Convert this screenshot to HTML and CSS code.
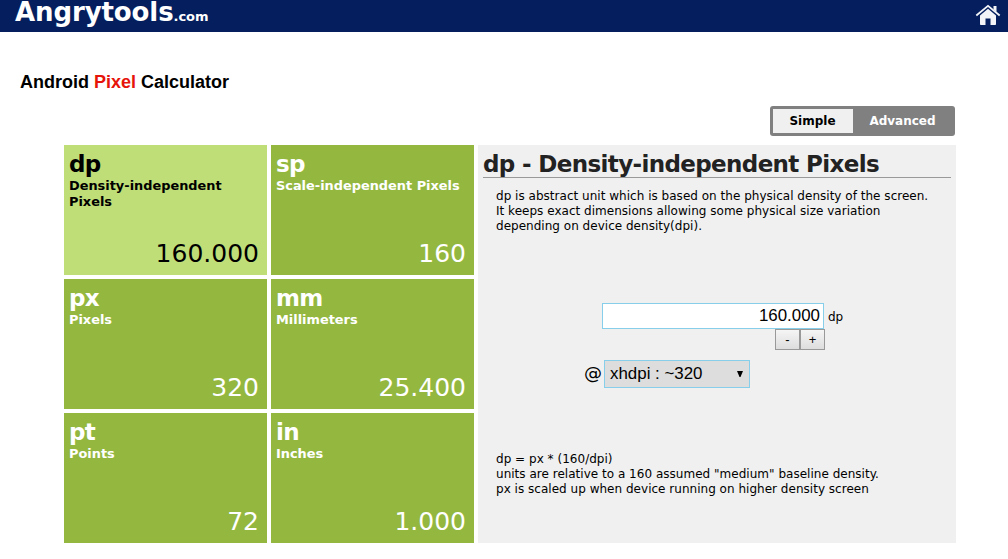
FILE: index.html
```html
<!DOCTYPE html>
<html lang="en">
<head>
<meta charset="utf-8">
<title>Android Pixel Calculator</title>
<link rel="stylesheet" href="styles.css">
</head>
<body>
<header class="topbar">
  <a class="logo"><span class="logo-name">Angrytools</span><span class="logo-tld">.com</span></a>
  <svg class="home" width="26" height="22" viewBox="0 0 26 22" aria-label="Home">
    <path fill="#f2f4f8" d="M5 11.500 13 4.800l8 6.700v8.700a.8.8 0 0 1-.8.800H15.500v-6.500h-5V21H5.800a.8.800 0 0 1-.8-.8z"/>
    <path fill="none" stroke="#f2f4f8" stroke-width="1.800" d="M1.300 11.500 13 1.800l11.700 9.700"/>
    <path fill="#f2f4f8" d="M18.500 2h3v6l-3-2.600z"/>
  </svg>
</header>
<main class="page">
  <h1 class="title">Android <span class="accent">Pixel</span> Calculator</h1>
  <div class="modes">
    <div class="toggle"><span class="mode mode-on">Simple</span><span class="mode">Advanced</span></div>
  </div>
  <div class="calc">
    <section class="tiles">
      <div class="tile tile-on"><b class="unit">dp</b><span class="name">Density-independent Pixels</span><span class="value">160.000</span></div>
      <div class="tile"><b class="unit">sp</b><span class="name">Scale-independent Pixels</span><span class="value">160</span></div>
      <div class="tile"><b class="unit">px</b><span class="name">Pixels</span><span class="value">320</span></div>
      <div class="tile"><b class="unit">mm</b><span class="name">Millimeters</span><span class="value">25.400</span></div>
      <div class="tile"><b class="unit">pt</b><span class="name">Points</span><span class="value">72</span></div>
      <div class="tile"><b class="unit">in</b><span class="name">Inches</span><span class="value">1.000</span></div>
    </section>
    <section class="panel">
      <h2 class="heading"><span>dp - Density-independent Pixels</span></h2>
      <p class="text"><span>dp is abstract unit which is based on the physical density of the screen.</span><br><span>It keeps exact dimensions allowing some physical size variation</span><br><span>depending on device density(dpi).</span></p>
      <div class="entry"><input class="amount" value="160.000"><span class="suffix">dp</span></div>
      <div class="steps"><button class="step">-</button><button class="step">+</button></div>
      <div class="density"><span class="at">@</span><div class="select"><span>xhdpi : ~320</span><svg width="6" height="6" viewBox="0 0 6 6"><path d="M0 0h6L3.500 6h-1z"/></svg></div></div>
      <p class="text formula"><span>dp = px * (160/dpi)</span><br><span>units are relative to a 160 assumed "medium" baseline density.</span><br><span>px is scaled up when device running on higher density screen</span></p>
    </section>
  </div>
</main>
</body>
</html>
```
FILE: styles.css
```css
* { box-sizing: border-box; }
body { margin: 0; background: #fff; color: #000; font-family: "DejaVu Sans", Verdana, sans-serif; }
.topbar { display: flex; justify-content: space-between; align-items: flex-start; height: 32px; padding: 0 8px 0 15px; background: #051f5e; color: #fff; }
.logo { display: flex; align-items: baseline; line-height: 24px; font-weight: bold; }
.logo-name { font-size: 26px; letter-spacing: -0.1px; }
.logo-tld { font-size: 13px; letter-spacing: -0.05px; }
.home { margin: 4px -1px 0 0; }
.title { margin: 0; padding: 39px 0 0 20px; height: 74px; font: bold 18px/22px "Liberation Sans", Arial, sans-serif; }
.accent { color: #e6140a; }
.modes { display: flex; justify-content: flex-end; padding-right: 53px; height: 39px; }
.toggle { display: flex; width: 185px; height: 30px; padding: 3px; background: #808080; border-radius: 3px; font-weight: bold; font-size: 12px; line-height: 24px; color: #fff; text-align: center; }
.mode { flex: 1; }
.mode-on { flex: 0 0 80px; padding-right: 1px; background: #f0f0f0; color: #000; }
.calc { display: flex; gap: 4px; padding-left: 64px; }
.tiles { display: grid; grid-template-columns: 203px 203px; grid-auto-rows: 130px; gap: 4px; }
.tile { display: flex; flex-direction: column; padding: 5px 8px 7px 5px; background: #94b83f; color: #fff; }
.tile-on { background: #bfde77; color: #000; }
.unit { font-size: 23px; line-height: 28px; letter-spacing: -0.6px; }
.name { font-size: 12.900px; line-height: 16px; font-weight: bold; }
.value { margin-top: auto; text-align: right; font-size: 25px; line-height: 28px; }
.panel { width: 478px; height: 398px; padding: 4px 5px 0; background: #f0f0f0; }
.heading { margin: 0; height: 29px; border-bottom: 1px solid #999; font-size: 23px; line-height: 30px; letter-spacing: -0.63px; white-space: nowrap; color: #222; }
.text { margin: 11px 0 0 13px; font-size: 12px; line-height: 15px; letter-spacing: 0.02px; white-space: nowrap; }
.entry { display: flex; align-items: center; margin: 69px 0 0 119px; }
.amount { width: 222px; height: 26px; padding: 0 3px; border: 1px solid #87ceeb; background: #fff; font: 16.900px "Liberation Sans", Arial, sans-serif; text-align: right; }
.suffix { margin-left: 4px; font-size: 12px; line-height: 26px; padding-top: 1px; height: 26px; }
.steps { display: flex; margin-left: 292px; }
.step { width: 25px; height: 21px; padding: 0; border: 1px solid #999; background: linear-gradient(#f5f5f5, #ddd); font: 13px "Liberation Sans", Arial, sans-serif; }
.density { display: flex; align-items: center; margin: 10px 0 0 101px; }
.at { width: 20px; font-size: 18px; line-height: 26px; padding-bottom: 2px; }
.select { display: flex; justify-content: space-between; align-items: center; width: 146px; height: 28px; padding: 0 6px 0 5px; border: 1px solid #87ceeb; background: #ddd; font: 16.900px/26px "Liberation Sans", Arial, sans-serif; }
.formula { margin-top: 64px; }
```
